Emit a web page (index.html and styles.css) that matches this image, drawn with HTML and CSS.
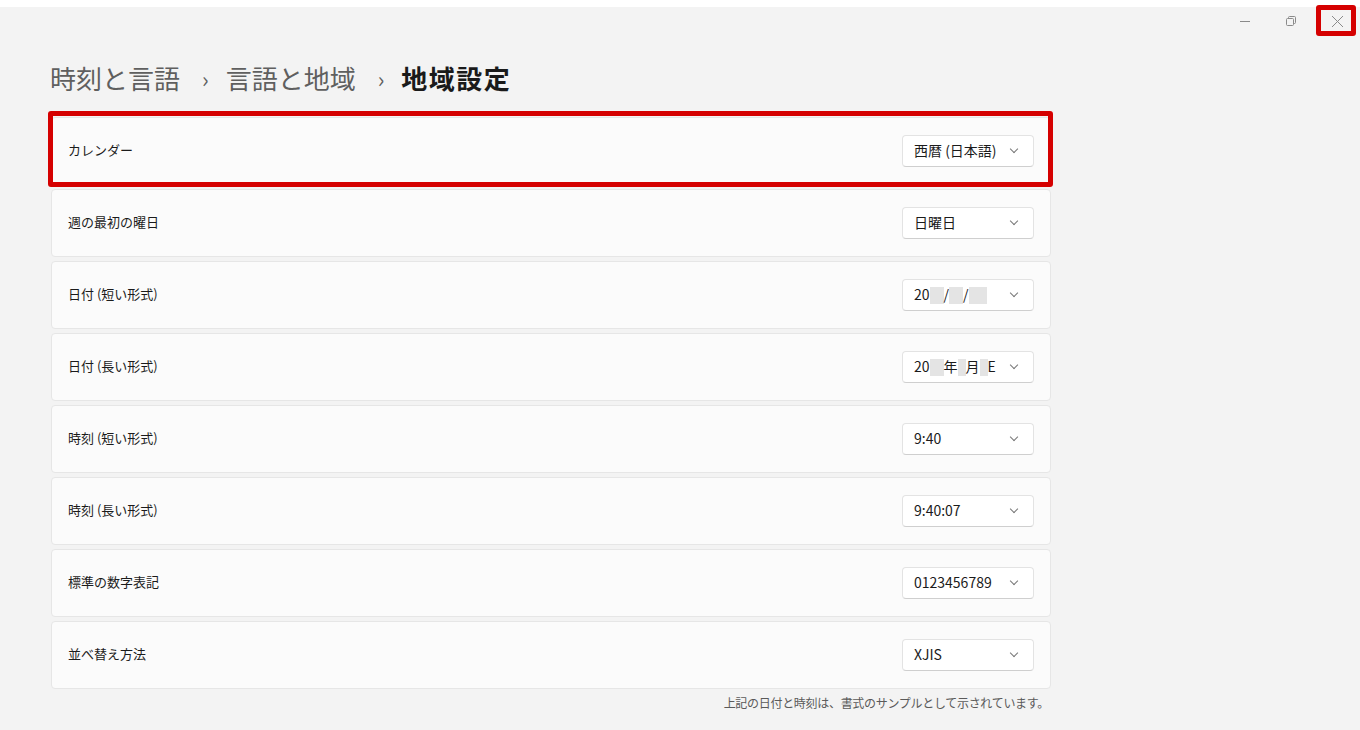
FILE: index.html
```html
<!DOCTYPE html>
<html lang="ja">
<head>
  <meta charset="UTF-8">
  <title>地域設定</title>
  <link rel="stylesheet" href="styles.css">
</head>
<body>
  <div class="topstrip"></div>
  <div class="titlebar">
    <div class="winbtn">
      <svg width="10" height="10" viewBox="0 0 10 10"><path d="M0 5.5h10" stroke="#8a8a8a" stroke-width="1"/></svg>
    </div>
    <div class="winbtn">
      <svg width="10" height="10" viewBox="0 0 10 10"><rect x="0.5" y="2.5" width="7" height="7" rx="1" fill="none" stroke="#8a8a8a"/><path d="M2.5 2.5v-1a1 1 0 0 1 1-1h5a1 1 0 0 1 1 1v5a1 1 0 0 1-1 1h-1" fill="none" stroke="#8a8a8a"/></svg>
    </div>
    <div class="winbtn close">
      <svg width="13" height="13" viewBox="0 0 13 13"><path d="M1 1l11 11M12 1L1 12" stroke="#8a8a8a" stroke-width="1"/></svg>
    </div>
  </div>
  <div class="mark mark-close"></div>

  <div class="main">
    <h1 class="crumbs">
      <span class="crumb">時刻と言語</span>
      <span class="sep">›</span>
      <span class="crumb">言語と地域</span>
      <span class="sep">›</span>
      <span class="crumb current">地域設定</span>
    </h1>

    <div class="list">
      <div class="card">
        <span class="label">カレンダー</span>
        <div class="select"><span class="val">西暦 (日本語)</span><span class="chev"></span></div>
        <div class="mark mark-row"></div>
      </div>
      <div class="card">
        <span class="label">週の最初の曜日</span>
        <div class="select"><span class="val">日曜日</span><span class="chev"></span></div>
      </div>
      <div class="card">
        <span class="label">日付 (短い形式)</span>
        <div class="select"><span class="val">20<i class="blur w14"></i>/<i class="blur w14"></i>/<i class="blur w18"></i></span><span class="chev"></span></div>
      </div>
      <div class="card">
        <span class="label">日付 (長い形式)</span>
        <div class="select"><span class="val">20<i class="blur w14"></i>年<i class="blur w8"></i>月<i class="blur w8"></i>E</span><span class="chev"></span></div>
      </div>
      <div class="card">
        <span class="label">時刻 (短い形式)</span>
        <div class="select"><span class="val">9:40</span><span class="chev"></span></div>
      </div>
      <div class="card">
        <span class="label">時刻 (長い形式)</span>
        <div class="select"><span class="val">9:40:07</span><span class="chev"></span></div>
      </div>
      <div class="card">
        <span class="label">標準の数字表記</span>
        <div class="select"><span class="val">0123456789</span><span class="chev"></span></div>
      </div>
      <div class="card">
        <span class="label">並べ替え方法</span>
        <div class="select"><span class="val">XJIS</span><span class="chev"></span></div>
      </div>
    </div>

    <p class="note">上記の日付と時刻は、書式のサンプルとして示されています。</p>
  </div>
</body>
</html>
```

FILE: styles.css
```css
html,
body {
  margin: 0;
  padding: 0;
}
body {
  background-color: #f3f3f3;
  font-family: "Noto Sans CJK JP", "Noto Sans", sans-serif;
  color: #1b1b1b;
  position: relative;
  height: 730px;
  overflow: hidden;
}
.topstrip {
  height: 7px;
  background-color: #fff;
}
.titlebar {
  display: flex;
  justify-content: flex-end;
  height: 28px;
  padding-right: 0;
}
.winbtn {
  width: 46px;
  display: flex;
  align-items: center;
  justify-content: center;
}
.mark {
  position: absolute;
  border: 5px solid #d50000;
  border-radius: 3px;
  box-sizing: border-box;
  pointer-events: none;
}
.mark-close {
  left: 1316px;
  top: 5px;
  width: 40px;
  height: 31px;
}
.main {
  width: 1000px;
  padding-left: 51px;
}
.crumbs {
  margin: 23px 0 0 -1px;
  height: 40px;
  display: flex;
  align-items: center;
  font-size: 26px;
  font-weight: normal;
  line-height: 40px;
}
.crumb {
  color: #5f5f5f;
}
.crumb.current {
  color: #1a1a1a;
  font-weight: bold;
  letter-spacing: 1.5px;
}
.sep {
  color: #5f5f5f;
  font-size: 22px;
  margin: 0 17px 0 22px;
}
.list {
  margin-top: 19px;
  display: flex;
  flex-direction: column;
  gap: 4px;
}
.card {
  position: relative;
  height: 68px;
  box-sizing: border-box;
  background-color: #fbfbfb;
  border: 1px solid #e6e6e6;
  border-radius: 4px;
  display: flex;
  align-items: center;
  justify-content: space-between;
  padding: 0 16px 0 16px;
}
.label {
  font-size: 13px;
  color: #1b1b1b;
  margin-bottom: 4px;
}
.select {
  width: 132px;
  height: 32px;
  box-sizing: border-box;
  background-color: #fff;
  border: 1px solid #e3e3e3;
  border-bottom-color: #cfcfcf;
  border-radius: 4px;
  display: flex;
  align-items: center;
  justify-content: space-between;
  padding: 0 16px 0 11px;
  font-size: 14px;
}
.val {
  display: flex;
  align-items: center;
  white-space: nowrap;
  margin-bottom: 3px;
}
.blur {
  display: inline-block;
  height: 17px;
  margin-top: 3px;
  background-color: #e4e4e4;
}
.w8 { width: 8px; }
.w14 { width: 14px; }
.w18 { width: 18px; }
.chev {
  width: 5px;
  height: 5px;
  border-right: 1px solid #777;
  border-bottom: 1px solid #777;
  transform: rotate(45deg);
  margin-top: -4px;
}
.mark-row {
  left: -4px;
  top: -7px;
  right: -3px;
  bottom: -3px;
  border-width: 5px;
}
.note {
  margin: 5px 2px 0 0;
  text-align: right;
  font-size: 12px;
  letter-spacing: -0.3px;
  color: #5a5a5a;
}
```
